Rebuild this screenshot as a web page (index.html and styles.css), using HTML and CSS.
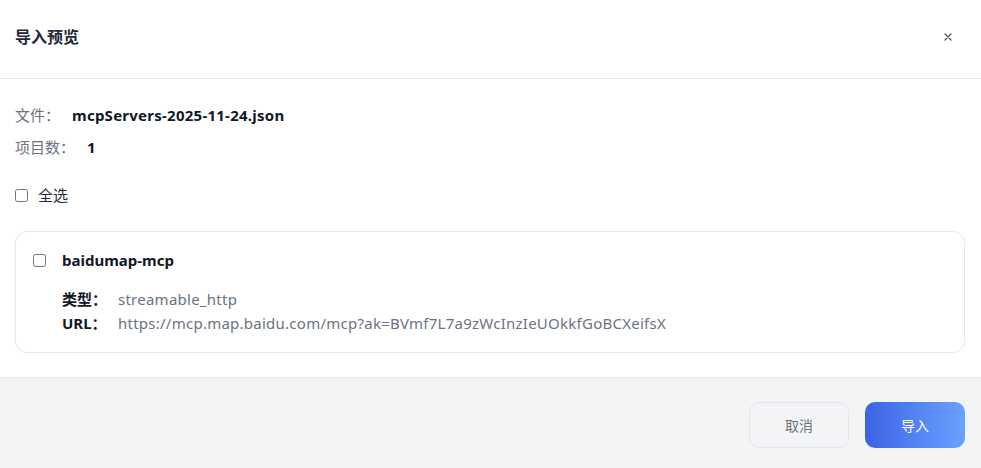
FILE: index.html
```html
<!DOCTYPE html>
<html lang="zh-CN">
<head>
<meta charset="utf-8">
<title>导入预览</title>
<link rel="stylesheet" href="styles.css">
</head>
<body>
<div class="dialog">
  <header class="header">
    <h1 class="title">导入预览</h1>
    <button class="close" aria-label="关闭">
      <svg width="8" height="8" viewBox="0 0 8 8"><path d="M1 1L7 7M7 1L1 7" stroke="#4b5563" stroke-width="1.3" stroke-linecap="round"/></svg>
    </button>
  </header>
  <main class="content">
    <div class="meta">
      <div class="meta-row"><span class="meta-label">文件：</span><span class="meta-value">mcpServers-2025-11-24.json</span></div>
      <div class="meta-row"><span class="meta-label">项目数：</span><span class="meta-value">1</span></div>
    </div>
    <label class="select-all"><input type="checkbox" class="check"><span>全选</span></label>
    <div class="card">
      <label class="card-head"><input type="checkbox" class="check"><span class="card-name">baidumap-mcp</span></label>
      <div class="details">
        <div class="detail-row"><span class="detail-label">类型：</span><span class="detail-value">streamable_http</span></div>
        <div class="detail-row"><span class="detail-label">URL：</span><span class="detail-value">https://mcp.map.baidu.com/mcp?ak=BVmf7L7a9zWcInzIeUOkkfGoBCXeifsX</span></div>
      </div>
    </div>
  </main>
  <footer class="footer">
    <button class="btn btn-cancel">取消</button>
    <button class="btn btn-primary">导入</button>
  </footer>
</div>
</body>
</html>
```
FILE: styles.css
```css
* { box-sizing: border-box; }
html, body { margin: 0; padding: 0; background: #fff; }
body {
  font-family: "Noto Sans", "Noto Sans CJK SC", sans-serif;
  font-size: 15px;
  color: #111827;
}
.dialog { width: 981px; height: 468px; display: flex; flex-direction: column; }
.header {
  height: 79px;
  padding: 0 23px 4px 15px;
  display: flex;
  align-items: center;
  justify-content: space-between;
  border-bottom: 1px solid #e5e7eb;
}
.title { margin: 0; font-size: 16px; font-weight: 700; color: #1f2937; line-height: 22px; }
.close {
  width: 20px; height: 20px; padding: 0; border: 0; background: transparent;
  display: flex; align-items: center; justify-content: center; cursor: pointer;
}
.content { padding: 25px 16px 24px 15px; }
.meta { display: flex; flex-direction: column; gap: 10px; }
.meta-row { display: flex; line-height: 22px; }
.meta-label { color: #6b7280; margin-right: 12px; }
.meta-value { font-weight: 700; color: #111827; letter-spacing: 0.25px; }
.select-all {
  margin-top: 26px;
  display: flex; align-items: center; gap: 10px;
  line-height: 22px; color: #1f2937;
}
.check { width: 13px; height: 13px; margin: 0; flex: none; }
.card {
  margin-top: 25px;
  border: 1px solid #e5e7eb;
  border-radius: 12px;
  padding: 17px 16px 17px 17px;
}
.card-head { display: flex; align-items: center; gap: 16px; line-height: 22px; }
.card-name { font-weight: 700; color: #111827; }
.details { margin-top: 16px; padding-left: 29px; }
.detail-row { display: flex; line-height: 24px; }
.detail-label { width: 56px; font-weight: 700; color: #111827; flex: none; }
.detail-value { color: #6b7280; letter-spacing: 0.25px; }
.footer {
  flex: 1;
  background: #f3f4f6;
  border-top: 1px solid #e5e7eb;
  display: flex;
  justify-content: flex-end;
  align-items: flex-start;
  gap: 16px;
  padding: 24px 16px 0 0;
}
.btn {
  width: 100px; height: 46px;
  border-radius: 10px;
  font-family: inherit; font-size: 14px;
  cursor: pointer;
}
.btn-cancel { background: #f3f4f6; border: 1px solid #e5e7eb; color: #6b7280; }
.btn-primary {
  border: 0;
  color: #fff;
  background: linear-gradient(90deg, #3b63e6 0%, #6aa2ff 100%);
}
```
